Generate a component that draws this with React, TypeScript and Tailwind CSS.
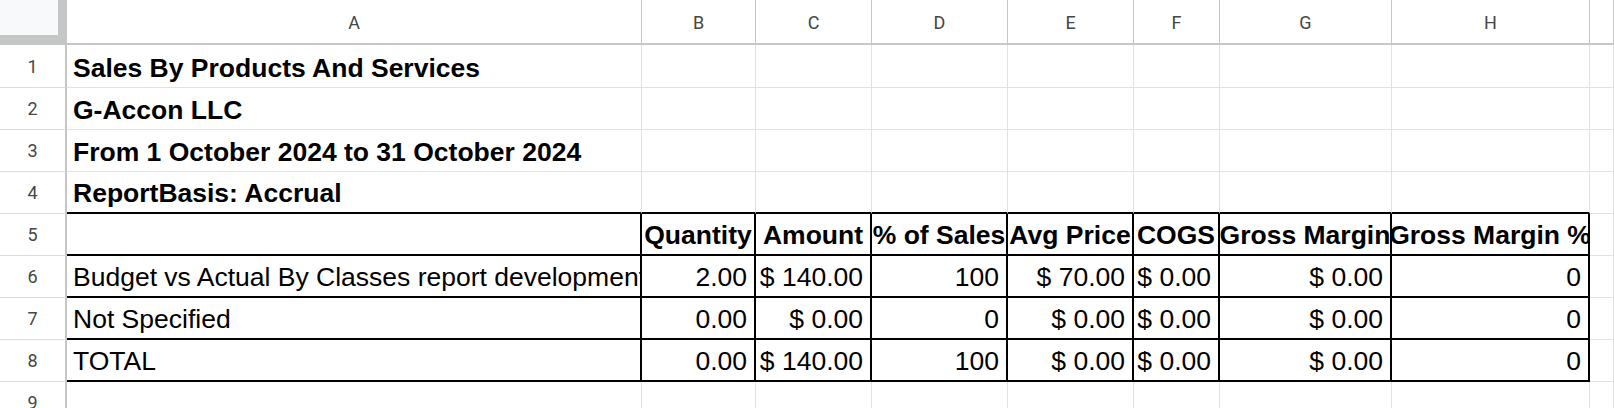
import React from 'react';

const LETTERS = ['A', 'B', 'C', 'D', 'E', 'F', 'G', 'H', ''];

const TITLES = [
  'Sales By Products And Services',
  'G-Accon LLC',
  'From 1 October 2024 to 31 October 2024',
  'ReportBasis: Accrual',
];

const HEADERS = ['', 'Quantity', 'Amount', '% of Sales', 'Avg Price', 'COGS', 'Gross Margin', 'Gross Margin %'];

const BODY = [
  ['Budget vs Actual By Classes report development', '2.00', '$ 140.00', '100', '$ 70.00', '$ 0.00', '$ 0.00', '0'],
  ['Not Specified', '0.00', '$ 0.00', '0', '$ 0.00', '$ 0.00', '$ 0.00', '0'],
  ['TOTAL', '0.00', '$ 140.00', '100', '$ 0.00', '$ 0.00', '$ 0.00', '0'],
];

const ROWS = [1, 2, 3, 4, 5, 6, 7, 8, 9];

function cellText(row: number, col: number): { text: string; kind: 'title' | 'head' | 'label' | 'num' } {
  if (row <= 4) return { text: col === 0 ? TITLES[row - 1] : '', kind: 'title' };
  if (row === 5) return { text: col < 8 ? HEADERS[col] : '', kind: 'head' };
  if (row <= 8 && col < 8) return { text: BODY[row - 6][col], kind: col === 0 ? 'label' : 'num' };
  return { text: '', kind: 'label' };
}

const Cell: React.FC<{ row: number; col: number }> = ({ row, col }) => {
  const boxed = row >= 5 && row <= 8 && col <= 7;
  const topOfBox = row >= 4 && row <= 8 && col <= 7;
  const right = boxed ? 'border-r-2 border-r-black' : 'border-r border-r-[#e2e2e2]';
  const bottom = topOfBox ? 'border-b-2 border-b-black' : 'border-b border-b-[#e2e2e2]';
  const { text, kind } = cellText(row, col);

  let align = 'justify-start pl-[6px]';
  let weight = 'font-normal';
  if (kind === 'title') weight = 'font-bold';
  if (kind === 'head') {
    align = 'justify-center';
    weight = 'font-bold';
  }
  if (kind === 'num') align = 'justify-end pr-[7px]';

  const clip = row >= 5 ? 'overflow-hidden' : 'overflow-visible';

  return (
    <div className={`flex items-end ${align} ${weight} ${right} ${bottom} ${clip} whitespace-nowrap pb-[4px] text-[26.5px] leading-[30px] text-black`}>
      {text}
    </div>
  );
};

export default function App() {
  return (
    <div className="w-[1614px] h-[408px] overflow-hidden bg-white font-['Liberation_Sans',Arial,sans-serif]">
      <div className="grid grid-cols-[67px_575px_114px_116px_136px_126px_86px_172px_198px_1fr] grid-rows-[45px_43px_repeat(8,42px)]">
        {/* corner with frozen-pane handles */}
        <div className="bg-[#c4c7c5]">
          <div className="w-[58px] h-[35px] bg-[#f8f9fa]"></div>
        </div>
        {LETTERS.map((l, i) => (
          <div
            key={`h${i}`}
            className="flex items-center justify-center border-r border-b-2 border-[#c4c7c5] bg-white pt-[1px] font-['Roboto',sans-serif] text-[18px] text-[#444746]"
          >
            {l}
          </div>
        ))}

        {ROWS.map((r) => (
          <React.Fragment key={r}>
            <div className="flex items-center justify-center border-r-2 border-b border-r-[#c4c7c5] border-b-[#dadce0] bg-white font-['Roboto',sans-serif] text-[18px] text-[#444746]">
              {r}
            </div>
            {LETTERS.map((_, c) => (
              <Cell key={`${r}-${c}`} row={r} col={c} />
            ))}
          </React.Fragment>
        ))}
      </div>
    </div>
  );
}
